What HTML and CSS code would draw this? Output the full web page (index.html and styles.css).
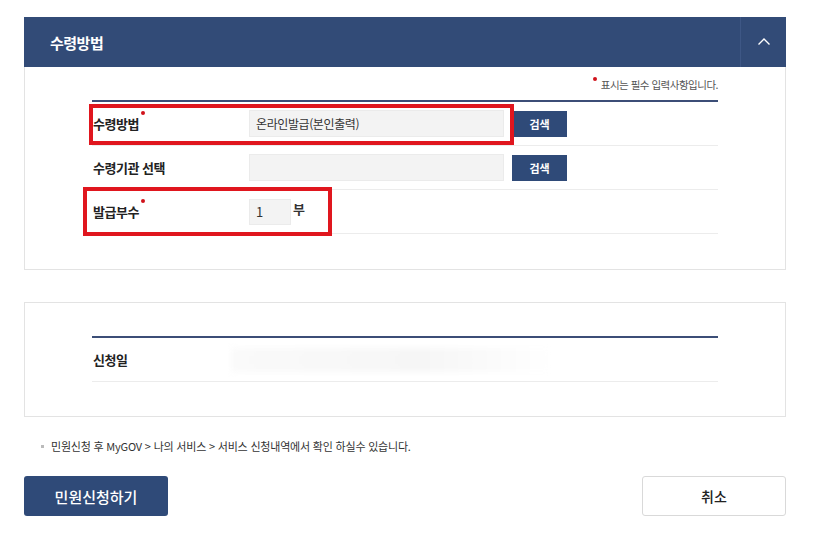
FILE: index.html
```html
<!DOCTYPE html>
<html lang="ko">
<head>
<meta charset="utf-8">
<link rel="stylesheet" href="styles.css">
</head>
<body>
<div class="page">
  <section class="panel">
    <div class="panel-head">
      <h2 class="panel-title">수령방법</h2>
      <button class="toggle" type="button" aria-label="접기">
        <svg width="14" height="10" viewBox="0 0 14 10"><path d="M1.5 7.5 L7 2 L12.5 7.5" fill="none" stroke="#ffffff" stroke-width="1.4"/></svg>
      </button>
    </div>
    <div class="panel-body">
      <p class="required-note"><span class="dot"></span>표시는 필수 입력사항입니다.</p>
      <div class="form-table">
        <div class="row">
          <div class="label">수령방법<span class="dot req"></span></div>
          <div class="field">
            <div class="input wide">온라인발급(본인출력)</div>
            <button class="btn-search" type="button">검색</button>
          </div>
        </div>
        <div class="row">
          <div class="label">수령기관 선택</div>
          <div class="field">
            <div class="input wide"></div>
            <button class="btn-search" type="button">검색</button>
          </div>
        </div>
        <div class="row">
          <div class="label">발급부수<span class="dot req"></span></div>
          <div class="field">
            <div class="input small">1</div>
            <span class="unit">부</span>
          </div>
        </div>
      </div>
      <div class="mark mark-1"></div>
      <div class="mark mark-2"></div>
    </div>
  </section>

  <section class="panel plain">
    <div class="panel-body second">
      <div class="form-table">
        <div class="row">
          <div class="label">신청일</div>
          <div class="field"><div class="blurred"></div></div>
        </div>
      </div>
    </div>
  </section>

  <p class="info"><span class="bullet"></span>민원신청 후 MyGOV &gt; 나의 서비스 &gt; 서비스 신청내역에서 확인 하실수 있습니다.</p>

  <div class="actions">
    <button class="btn-primary" type="button">민원신청하기</button>
    <button class="btn-cancel" type="button">취소</button>
  </div>
</div>
</body>
</html>
```

FILE: styles.css
```css
* { box-sizing: border-box; }
html, body { margin: 0; padding: 0; background: #ffffff; }
body {
  font-family: "Noto Sans CJK KR", "Noto Sans", sans-serif;
  color: #222;
  width: 816px;
  height: 547px;
  overflow: hidden;
}
.page {
  padding: 17px 30px 0 24px;
}
.panel-head {
  height: 50px;
  background: #324b77;
  display: flex;
  align-items: center;
  justify-content: space-between;
  padding-left: 26px;
}
.panel-title {
  margin: 0;
  color: #fff;
  font-size: 15px;
  font-weight: 700;
  letter-spacing: -0.5px;
}
.toggle {
  width: 46px;
  height: 50px;
  border: 0;
  border-left: 1px solid #3e5785;
  background: transparent;
  display: flex;
  align-items: center;
  justify-content: center;
  padding: 0;
}
.panel-body {
  position: relative;
  border: 1px solid #e3e3e3;
  border-top: 0;
  padding: 0 67px 35px 67px;
}
.panel.plain .panel-body {
  border-top: 1px solid #e3e3e3;
  padding-top: 33px;
  padding-bottom: 34px;
}
.required-note {
  margin: 0;
  height: 33px;
  display: flex;
  align-items: center;
  justify-content: flex-end;
  font-size: 10.5px;
  color: #555;
  letter-spacing: -0.5px;
  padding-top: 1px;
}
.dot {
  display: inline-block;
  width: 4px;
  height: 4px;
  border-radius: 50%;
  background: #d0121b;
}
.required-note .dot {
  margin-right: 4px;
  position: relative;
  top: -5px;
}
.form-table {
  border-top: 2px solid #3c4e77;
}
.row {
  display: flex;
  align-items: center;
  height: 44px;
  border-bottom: 1px solid #ececec;
}
.label {
  width: 157px;
  font-size: 13px;
  font-weight: 700;
  color: #222;
  letter-spacing: -0.5px;
  position: relative;
  padding-left: 1px;
}
.label .req {
  position: absolute;
  top: -3px;
  margin-left: 2px;
}
.field {
  display: flex;
  align-items: center;
  gap: 8px;
  flex: 1;
}
.input {
  height: 27px;
  background: #f3f3f3;
  border: 1px solid #ebebeb;
  font-size: 12px;
  letter-spacing: -0.4px;
  color: #333;
  display: flex;
  align-items: center;
  padding-left: 6px;
}
.input.wide { width: 255px; }
.input.small { width: 42px; height: 26px; font-size: 13px; }
.unit {
  font-size: 13px;
  font-weight: 700;
  color: #333;
  margin-left: -6px;
  margin-top: -6px;
}
.btn-search {
  width: 55px;
  height: 26px;
  border: 0;
  background: #2f4a78;
  color: #fff;
  font-family: inherit;
  font-size: 11px;
  font-weight: 700;
  padding: 0;
  margin-left: 0;
}
.mark {
  position: absolute;
  border: 4px solid #e0161e;
  pointer-events: none;
}
.mark-1 { left: 64px; top: 37px; width: 425px; height: 41px; }
.mark-2 { left: 58px; top: 120px; width: 249px; height: 49px; }
.panel.plain { margin-top: 32px; }
.blurred {
  width: 320px;
  height: 24px;
  margin-left: -18px;
  background: linear-gradient(90deg, #fafafa, #f6f6f6 60%, #ffffff);
  filter: blur(3px);
}
.info {
  margin: 21px 0 0 0;
  padding-left: 17px;
  display: flex;
  align-items: center;
  font-size: 11px;
  color: #333;
  letter-spacing: -0.2px;
  height: 16px;
}
.bullet {
  width: 3px;
  height: 3px;
  background: #bbb;
  margin-right: 7px;
}
.actions {
  margin-top: 22px;
  display: flex;
  justify-content: space-between;
}
.btn-primary {
  width: 144px;
  height: 40px;
  border: 0;
  border-radius: 3px;
  background: #2f4a78;
  color: #fff;
  font-family: inherit;
  font-size: 15px;
  font-weight: 500;
}
.btn-cancel {
  width: 144px;
  height: 40px;
  border: 1px solid #d9d9d9;
  border-radius: 3px;
  background: #fff;
  color: #222;
  font-family: inherit;
  font-size: 14px;
  font-weight: 500;
}
```
